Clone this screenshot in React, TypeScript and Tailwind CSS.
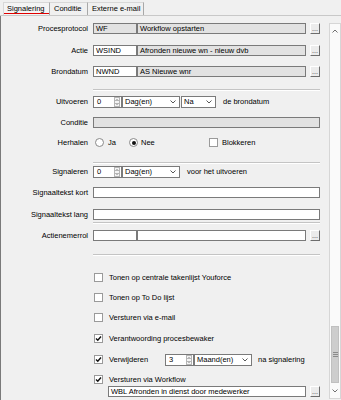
import React from "react";

function Field({ w, gray, children }: { w: string; gray?: boolean; children?: React.ReactNode }) {
  return (
    <div
      className={`${w} h-[11px] shrink-0 border border-[#7a7a7a] ${gray ? "bg-[#e2e2e2]" : "bg-white"} flex items-center pl-[2px] overflow-hidden whitespace-nowrap leading-none`}
    >
      {children}
    </div>
  );
}

function Dots() {
  return (
    <div className="w-[10px] h-[11px] ml-[4px] shrink-0 bg-[#ececec] border border-t-white border-l-white border-b-[#6d6d6d] border-r-[#6d6d6d] flex items-end justify-center text-[7px] leading-none pb-[1px] text-[#333]">
      ...
    </div>
  );
}

function Label({ children }: { children: React.ReactNode }) {
  return <div className="w-[87px] shrink-0 text-right mr-[5px] whitespace-nowrap">{children}</div>;
}

function Sep({ mt }: { mt: string }) {
  return <div className={`${mt} ml-[92px] w-[227px] h-[2px] border-t border-t-[#c4c4c4] border-b border-b-white`} />;
}

function Spin({ value }: { value: string }) {
  return (
    <div className="w-[29px] h-[12px] shrink-0 border border-[#7a7a7a] bg-white flex items-center justify-between pl-[3px] leading-none">
      <span>{value}</span>
      <svg width="6" height="10" viewBox="0 0 6 10" className="mr-[1px]">
        <rect x="0.5" y="0.5" width="5" height="9" fill="#f4f4f4" stroke="#b5b5b5" />
        <path d="M1.5 4 L3 2.5 L4.5 4" fill="none" stroke="#555" strokeWidth="0.8" />
        <path d="M1.5 6 L3 7.5 L4.5 6" fill="none" stroke="#555" strokeWidth="0.8" />
      </svg>
    </div>
  );
}

function Select({ w, value }: { w: string; value: string }) {
  return (
    <div className={`${w} h-[12px] shrink-0 border border-[#7a7a7a] bg-white flex items-center justify-between pl-[2px] pr-[3px] leading-none`}>
      <span>{value}</span>
      <svg width="6" height="4" viewBox="0 0 6 4">
        <path d="M0.5 0.5 L3 3 L5.5 0.5" fill="none" stroke="#444" strokeWidth="0.9" />
      </svg>
    </div>
  );
}

function Check({ checked }: { checked?: boolean }) {
  return (
    <div className="w-[9px] h-[9px] shrink-0 border border-[#9a9a9a] bg-white flex items-center justify-center">
      {checked && (
        <svg width="7" height="7" viewBox="0 0 7 7">
          <path d="M1 3.5 L2.8 5.3 L6 1.5" fill="none" stroke="#111" strokeWidth="1.4" />
        </svg>
      )}
    </div>
  );
}

function Radio({ checked }: { checked?: boolean }) {
  return (
    <div className="w-[9px] h-[9px] shrink-0 rounded-full border border-[#8a8a8a] bg-white flex items-center justify-center">
      {checked && <div className="w-[4px] h-[4px] rounded-full bg-[#111]" />}
    </div>
  );
}

function CheckRow({ mt, checked, children }: { mt: string; checked?: boolean; children: React.ReactNode }) {
  return (
    <div className={`${mt} h-[11px] flex items-center pl-[93px] whitespace-nowrap`}>
      <Check checked={checked} />
      <div className="ml-[6px] flex items-center">{children}</div>
    </div>
  );
}

export default function App() {
  return (
    <div className="w-[341px] h-[400px] overflow-hidden bg-[#f0f0f0] text-black text-[7.5px] font-['Liberation_Sans',Arial,sans-serif] leading-none">
      {/* tabs */}
      <div className="h-[15px] flex items-end pl-[3px]">
        <div className="relative w-[47px] h-[13px] border-t border-l border-r border-t-[#d8d8d8] border-l-[#d8d8d8] border-r-[#a8a8a8] bg-[#f4f4f4] pl-[3px] flex items-center">
          <span>Signalering</span>
          <div className="absolute left-0 right-0 bottom-[1px] h-[1px] bg-[#e00000]" />
        </div>
        <div className="w-[38px] h-[13px] border-t border-r border-t-[#d8d8d8] border-r-[#a8a8a8] pl-[4px] flex items-center">
          Conditie
        </div>
        <div className="w-[56px] h-[13px] border-t border-r border-t-[#d8d8d8] border-r-[#a8a8a8] pl-[4px] flex items-center">
          Externe e-mail
        </div>
      </div>

      {/* body */}
      <div className="flex border-t border-[#c8c8c8]">
        <div className="w-[329px] h-[385px] border-l border-[#7a7a7a] pt-[7px]">
          <div className="h-[11px] flex items-center">
            <Label>Procesprotocol</Label>
            <Field w="w-[44px]" gray>WF</Field>
            <Field w="w-[169px]" gray>Workflow opstarten</Field>
            <Dots />
          </div>
          <div className="mt-[11px] h-[11px] flex items-center">
            <Label>Actie</Label>
            <Field w="w-[44px]">WSIND</Field>
            <Field w="w-[169px]" gray>Afronden nieuwe wn - nieuw dvb</Field>
            <Dots />
          </div>
          <div className="mt-[10px] h-[11px] flex items-center">
            <Label>Brondatum</Label>
            <Field w="w-[44px]">NWND</Field>
            <Field w="w-[169px]" gray>AS Nieuwe wnr</Field>
            <Dots />
          </div>

          <Sep mt="mt-[12px]" />

          <div className="mt-[5px] h-[11px] flex items-center">
            <Label>Uitvoeren</Label>
            <Spin value="0" />
            <Select w="w-[58px]" value="Dag(en)" />
            <div className="ml-[1px]">
              <Select w="w-[35px]" value="Na" />
            </div>
            <span className="ml-[7px]">de brondatum</span>
          </div>

          <div className="mt-[10px] h-[11px] flex items-center">
            <Label>Conditie</Label>
            <Field w="w-[227px]" gray />
          </div>

          <div className="mt-[9px] h-[11px] flex items-center">
            <Label>Herhalen</Label>
            <div className="ml-[2px]">
              <Radio />
            </div>
            <span className="ml-[4px] w-[21px]">Ja</span>
            <Radio checked />
            <span className="ml-[3px] w-[68px]">Nee</span>
            <Check />
            <span className="ml-[4px]">Blokkeren</span>
          </div>

          <Sep mt="mt-[14px]" />

          <div className="mt-[2px] h-[11px] flex items-center">
            <Label>Signaleren</Label>
            <Spin value="0" />
            <Select w="w-[58px]" value="Dag(en)" />
            <span className="ml-[7px]">voor het uitvoeren</span>
          </div>

          <div className="mt-[10px] h-[11px] flex items-center">
            <Label>Signaaltekst kort</Label>
            <Field w="w-[227px]" />
          </div>

          <div className="mt-[11px] h-[11px] flex items-center">
            <Label>Signaaltekst lang</Label>
            <Field w="w-[227px]" />
          </div>

          <Sep mt="mt-[2px]" />

          <div className="mt-[6px] h-[11px] flex items-center">
            <Label>Actienemerrol</Label>
            <Field w="w-[44px]" />
            <Field w="w-[169px]" />
            <Dots />
          </div>

          <Sep mt="mt-[13px]" />

          <CheckRow mt="mt-[16px]">Tonen op centrale takenlijst Youforce</CheckRow>
          <CheckRow mt="mt-[9px]">Tonen op To Do lijst</CheckRow>
          <CheckRow mt="mt-[9px]">Versturen via e-mail</CheckRow>
          <CheckRow mt="mt-[10px]" checked>Verantwoording procesbewaker</CheckRow>
          <CheckRow mt="mt-[10px]" checked>
            <span className="w-[56px]">Verwijderen</span>
            <Spin value="3" />
            <Select w="w-[58px]" value="Maand(en)" />
            <span className="ml-[6px]">na signalering</span>
          </CheckRow>
          <CheckRow mt="mt-[9px]" checked>Versturen via Workflow</CheckRow>
          <div className="mt-[1px] h-[11px] flex items-center pl-[107px]">
            <Field w="w-[198px]">WBL Afronden in dienst door medewerker</Field>
            <Dots />
          </div>
        </div>

        {/* scrollbar */}
        <div className="w-[12px] mt-[7px] h-[376px] border border-[#d6d6d6] bg-[#fafafa] flex flex-col">
          <div className="h-[14px] flex items-center justify-center">
            <svg width="6" height="4" viewBox="0 0 6 4">
              <path d="M0.5 3.5 L3 1 L5.5 3.5" fill="none" stroke="#606060" strokeWidth="0.9" />
            </svg>
          </div>
          <div className="flex-1" />
          <div className="h-[57px] mx-[1px] bg-[#cdcdcd] border border-[#c0c0c0] flex flex-col items-center justify-center gap-[1px]">
            <div className="w-[5px] h-[1px] bg-[#8a8a8a]" />
            <div className="w-[5px] h-[1px] bg-[#8a8a8a]" />
            <div className="w-[5px] h-[1px] bg-[#8a8a8a]" />
          </div>
          <div className="h-[15px] flex items-center justify-center">
            <svg width="6" height="4" viewBox="0 0 6 4">
              <path d="M0.5 0.5 L3 3 L5.5 0.5" fill="none" stroke="#606060" strokeWidth="0.9" />
            </svg>
          </div>
        </div>
      </div>
    </div>
  );
}
